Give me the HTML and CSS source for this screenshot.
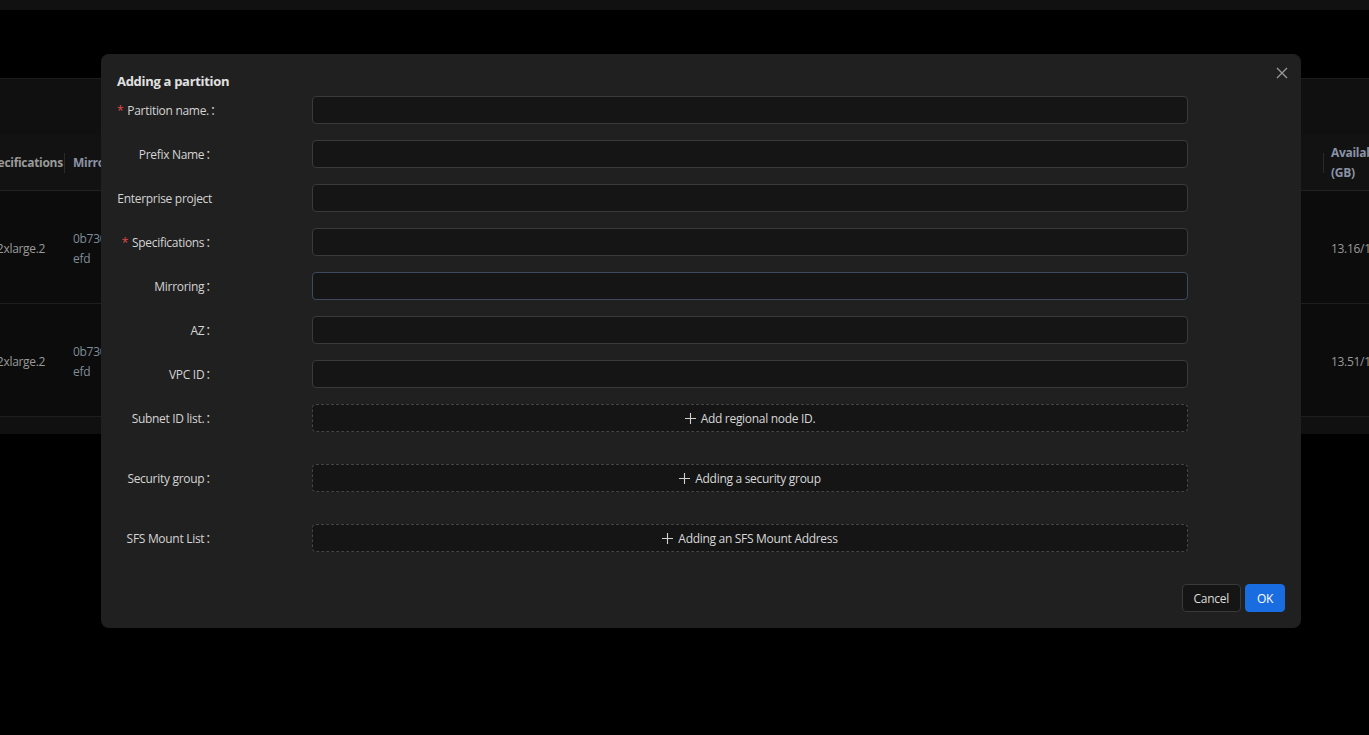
FILE: index.html
```html
<!DOCTYPE html>
<html lang="en">
<head>
    <meta charset="UTF-8">
    <meta name="viewport" content="width=device-width, initial-scale=1.0">
    <title>Adding a partition</title>
    <link rel="stylesheet" href="styles.css">
</head>
<body>
    <div class="topbar"></div>
    <div class="page">
        <div class="toolbar"></div>
        <div class="table">
            <div class="tr head">
                <div class="td c-spec">Specifications</div>
                <div class="td c-mirror">Mirroring</div>
                <div class="td c-fill"></div>
                <div class="td c-avail">Available<br>(GB)</div>
            </div>
            <div class="tr">
                <div class="td c-spec">c7.2xlarge.2</div>
                <div class="td c-mirror id">0b730c2f<br>efd</div>
                <div class="td c-fill"></div>
                <div class="td c-avail">13.16/16</div>
            </div>
            <div class="tr">
                <div class="td c-spec">c7.2xlarge.2</div>
                <div class="td c-mirror id">0b730c2f<br>efd</div>
                <div class="td c-fill"></div>
                <div class="td c-avail">13.51/16</div>
            </div>
        </div>
        <div class="table-foot"></div>
    </div>

    <div class="modal">
        <div class="modal-head">
            <h2>Adding a partition</h2>
            <span class="close">
                <svg width="12" height="12" viewBox="0 0 12 12"><path d="M1 1L11 11M11 1L1 11" stroke="#9a9a9a" stroke-width="1.3"/></svg>
            </span>
        </div>
        <form class="form">
            <div class="row"><label><span class="req">*</span>Partition name.<span class="colon">：</span></label><div class="input"></div></div>
            <div class="row"><label>Prefix Name<span class="colon">：</span></label><div class="input"></div></div>
            <div class="row"><label>Enterprise project</label><div class="input"></div></div>
            <div class="row"><label><span class="req">*</span>Specifications<span class="colon">：</span></label><div class="input"></div></div>
            <div class="row"><label>Mirroring<span class="colon">：</span></label><div class="input focus"></div></div>
            <div class="row"><label>AZ<span class="colon">：</span></label><div class="input"></div></div>
            <div class="row"><label>VPC ID<span class="colon">：</span></label><div class="input"></div></div>
            <div class="row wide"><label>Subnet ID list.<span class="colon">：</span></label><div class="add"><svg class="plus" width="11" height="11" viewBox="0 0 11 11"><path d="M5.5 0V11M0 5.5H11" stroke="#d0d0d0" stroke-width="1.1"/></svg>Add regional node ID.</div></div>
            <div class="row wide"><label>Security group<span class="colon">：</span></label><div class="add"><svg class="plus" width="11" height="11" viewBox="0 0 11 11"><path d="M5.5 0V11M0 5.5H11" stroke="#d0d0d0" stroke-width="1.1"/></svg>Adding a security group</div></div>
            <div class="row"><label>SFS Mount List<span class="colon">：</span></label><div class="add"><svg class="plus" width="11" height="11" viewBox="0 0 11 11"><path d="M5.5 0V11M0 5.5H11" stroke="#d0d0d0" stroke-width="1.1"/></svg>Adding an SFS Mount Address</div></div>
        </form>
        <div class="modal-foot">
            <button type="button" class="btn">Cancel</button>
            <button type="button" class="btn primary">OK</button>
        </div>
    </div>
</body>
</html>
```

FILE: styles.css
```css
body{
    margin: 0;
    background-color: #000;
    font-family: "Open Sans", "Noto Sans", "Noto Sans CJK SC", sans-serif;
    font-size: 12px;
    letter-spacing: -0.3px;
    color: #d6d6d6;
    height: 735px;
    overflow: hidden;
}
.topbar{
    height: 10px;
    background-color: #111;
}
.page{
    margin-top: 68px;
    background-color: #0c0c0c;
    border-top: 1px solid #1c1c1c;
    overflow: hidden;
}
.toolbar{
    height: 56px;
    background-color: #101010;
}
.tr{
    display: flex;
    height: 112px;
    border-bottom: 1px solid #1e1e1e;
    margin-left: -16px;
}
.tr.head{
    height: 55px;
    background-color: #121212;
    font-weight: 700;
    border-bottom: 1px solid #222;
}
.td{
    display: flex;
    align-items: center;
    padding: 4px 8px 0;
    line-height: 20px;
    color: #9a9a9a;
    white-space: nowrap;
}
.head .td{
    padding-top: 0;
}
.c-spec{
    width: 72px;
    padding-left: 0;
}
.tr:not(.head) .c-spec{
    margin-left: -2px;
    width: 74px;
}
.head .c-mirror{
    border-left: 1px solid #2a2a2a;
    height: 20px;
    margin-top: 18px;
    color: #8a93a6;
}
.c-mirror{
    width: 80px;
    border-left: 1px solid transparent;
}
.id{
    color: #7f8c99;
}
.c-fill{
    flex: 1;
}
.head .c-avail{
    position: relative;
    margin-top: 8px;
    align-self: flex-start;
    display: block;
    color: #8a93a6;
}
.head .c-avail::before{
    content: '';
    position: absolute;
    left: 0;
    top: 10px;
    height: 20px;
    border-left: 1px solid #2a2a2a;
}
.c-avail{
    width: 30px;
    border-left: 1px solid transparent;
    overflow: hidden;
}
.table-foot{
    height: 17px;
    background-color: #101010;
}

/* dialog over the list */
.modal{
    position: absolute;
    left: 101px;
    top: 54px;
    width: 1200px;
    height: 574px;
    box-sizing: border-box;
    background-color: #202020;
    border-radius: 8px;
    padding: 17px 16px 16px 16px;
    display: flex;
    flex-direction: column;
}
.modal-head{
    display: flex;
    justify-content: space-between;
    align-items: flex-start;
}
.modal-head h2{
    margin: 0;
    font-size: 13px;
    font-weight: 700;
    color: #e0e0e0;
    line-height: 20px;
}
.close{
    margin-top: -5px;
    margin-right: -3px;
}
.form{
    margin-top: 5px;
    display: flex;
    flex-direction: column;
    gap: 16px;
}
.row{
    display: flex;
    align-items: center;
    height: 28px;
}
.row.wide{
    margin-bottom: 16px;
}
.row label{
    width: 95px;
    flex-shrink: 0;
    margin-right: 100px;
    text-align: right;
    white-space: nowrap;
    color: #d4d4d4;
}
.colon{
    margin-left: 1px;
    margin-right: -5px;
}
.req{
    color: #e5484d;
    margin-right: 4px;
}
.input,.add{
    width: 876px;
    height: 28px;
    box-sizing: border-box;
    background-color: #151515;
    border: 1px solid #3a3a3a;
    border-radius: 4px;
}
.input.focus{
    border-color: #3d4a5c;
}
.add{
    border-style: dashed;
    border-color: #444;
    display: flex;
    align-items: center;
    justify-content: center;
    color: #d8d8d8;
}
.plus{
    margin-right: 5px;
}
.modal-foot{
    margin-top: auto;
    display: flex;
    justify-content: flex-end;
    gap: 4px;
}
.btn{
    height: 28px;
    padding: 0 11px;
    border-radius: 4px;
    border: 1px solid #3a3a3a;
    background-color: #151515;
    color: #dcdcdc;
    font-family: inherit;
    font-size: 12px;
    letter-spacing: -0.3px;
}
.btn.primary{
    background-color: #1a6de0;
    border-color: #1a6de0;
    color: #fff;
    padding: 0 11px;
}
```
